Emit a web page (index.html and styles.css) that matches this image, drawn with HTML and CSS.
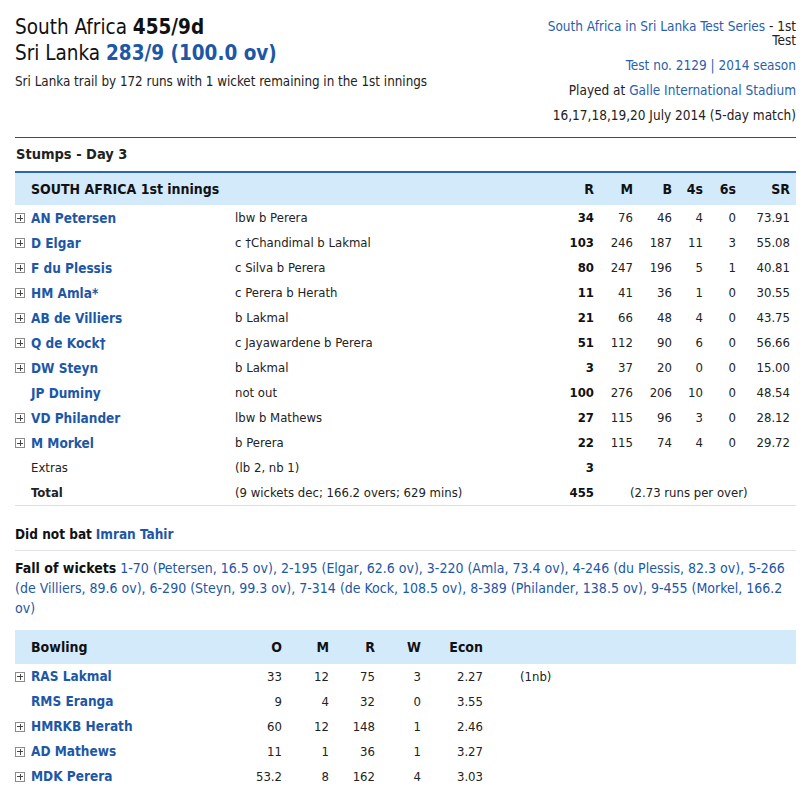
FILE: index.html
```html
<!DOCTYPE html>
<html>
<head>
<meta charset="utf-8">
<link rel="stylesheet" href="styles.css">
</head>
<body>
<div class="page">
  <header class="match-head">
    <div class="scores">
      <div class="team">South Africa <b>455/9d</b></div>
      <div class="team">Sri Lanka <b class="live">283/9 (100.0 ov)</b></div>
      <p class="status">Sri Lanka trail by 172 runs with 1 wicket remaining in the 1st innings</p>
    </div>
    <div class="info">
      <p><a class="lnk">South Africa in Sri Lanka Test Series</a> - 1st Test</p>
      <p class="lnk">Test no. 2129 | 2014 season</p>
      <p>Played at <a class="lnk">Galle International Stadium</a></p>
      <p>16,17,18,19,20 July 2014 (5-day match)</p>
    </div>
  </header>

  <h2 class="state">Stumps - Day 3</h2>

  <table class="bat">
    <colgroup>
      <col class="c-name"><col class="c-dis"><col class="c-r"><col class="c-m"><col class="c-b"><col class="c-4"><col class="c-6"><col class="c-sr">
    </colgroup>
    <thead>
      <tr><th class="lead" colspan="2">SOUTH AFRICA 1st innings</th><th>R</th><th>M</th><th>B</th><th>4s</th><th>6s</th><th>SR</th></tr>
    </thead>
    <tbody>
      <tr><td class="player"><span class="plus"></span><a>AN Petersen</a></td><td>lbw b Perera</td><td class="runs">34</td><td>76</td><td>46</td><td>4</td><td>0</td><td>73.91</td></tr>
      <tr><td class="player"><span class="plus"></span><a>D Elgar</a></td><td>c †Chandimal b Lakmal</td><td class="runs">103</td><td>246</td><td>187</td><td>11</td><td>3</td><td>55.08</td></tr>
      <tr><td class="player"><span class="plus"></span><a>F du Plessis</a></td><td>c Silva b Perera</td><td class="runs">80</td><td>247</td><td>196</td><td>5</td><td>1</td><td>40.81</td></tr>
      <tr><td class="player"><span class="plus"></span><a>HM Amla*</a></td><td>c Perera b Herath</td><td class="runs">11</td><td>41</td><td>36</td><td>1</td><td>0</td><td>30.55</td></tr>
      <tr><td class="player"><span class="plus"></span><a>AB de Villiers</a></td><td>b Lakmal</td><td class="runs">21</td><td>66</td><td>48</td><td>4</td><td>0</td><td>43.75</td></tr>
      <tr><td class="player"><span class="plus"></span><a>Q de Kock†</a></td><td>c Jayawardene b Perera</td><td class="runs">51</td><td>112</td><td>90</td><td>6</td><td>0</td><td>56.66</td></tr>
      <tr><td class="player"><span class="plus"></span><a>DW Steyn</a></td><td>b Lakmal</td><td class="runs">3</td><td>37</td><td>20</td><td>0</td><td>0</td><td>15.00</td></tr>
      <tr><td class="player"><a>JP Duminy</a></td><td>not out</td><td class="runs">100</td><td>276</td><td>206</td><td>10</td><td>0</td><td>48.54</td></tr>
      <tr><td class="player"><span class="plus"></span><a>VD Philander</a></td><td>lbw b Mathews</td><td class="runs">27</td><td>115</td><td>96</td><td>3</td><td>0</td><td>28.12</td></tr>
      <tr><td class="player"><span class="plus"></span><a>M Morkel</a></td><td>b Perera</td><td class="runs">22</td><td>115</td><td>74</td><td>4</td><td>0</td><td>29.72</td></tr>
      <tr><td class="player extra">Extras</td><td>(lb 2, nb 1)</td><td class="runs">3</td><td></td><td></td><td></td><td></td><td></td></tr>
      <tr class="total"><td class="player extra"><b>Total</b></td><td>(9 wickets dec; 166.2 overs; 629 mins)</td><td class="runs">455</td><td class="rpo" colspan="5">(2.73 runs per over)</td></tr>
    </tbody>
  </table>

  <div class="dnb"><b>Did not bat</b> <a>Imran Tahir</a></div>

  <div class="fow"><b class="fow-label">Fall of wickets</b> 1-70 (Petersen, 16.5 ov), 2-195 (Elgar, 62.6 ov), 3-220 (Amla, 73.4 ov), 4-246 (du Plessis, 82.3 ov), 5-266 (de Villiers, 89.6 ov), 6-290 (Steyn, 99.3 ov), 7-314 (de Kock, 108.5 ov), 8-389 (Philander, 138.5 ov), 9-455 (Morkel, 166.2 ov)</div>

  <table class="bowl">
    <colgroup>
      <col class="b-name"><col class="b-o"><col class="b-m"><col class="b-r"><col class="b-w"><col class="b-e"><col class="b-x">
    </colgroup>
    <thead>
      <tr><th class="lead">Bowling</th><th>O</th><th>M</th><th>R</th><th>W</th><th>Econ</th><th></th></tr>
    </thead>
    <tbody>
      <tr><td class="player"><span class="plus"></span><a>RAS Lakmal</a></td><td>33</td><td>12</td><td>75</td><td>3</td><td>2.27</td><td class="note">(1nb)</td></tr>
      <tr><td class="player"><a>RMS Eranga</a></td><td>9</td><td>4</td><td>32</td><td>0</td><td>3.55</td><td class="note"></td></tr>
      <tr><td class="player"><span class="plus"></span><a>HMRKB Herath</a></td><td>60</td><td>12</td><td>148</td><td>1</td><td>2.46</td><td class="note"></td></tr>
      <tr><td class="player"><span class="plus"></span><a>AD Mathews</a></td><td>11</td><td>1</td><td>36</td><td>1</td><td>3.27</td><td class="note"></td></tr>
      <tr><td class="player"><span class="plus"></span><a>MDK Perera</a></td><td>53.2</td><td>8</td><td>162</td><td>4</td><td>3.03</td><td class="note"></td></tr>
    </tbody>
  </table>
</div>
</body>
</html>
```

FILE: styles.css
```css
* { box-sizing: border-box; }
html, body { margin: 0; padding: 0; background: #fff; }
body {
  font-family: "DejaVu Sans Condensed", "DejaVu Sans", sans-serif;
  font-stretch: condensed;
  font-size: 13px;
  color: #222;
}
.page { width: 781px; margin-left: 15px; }
p { margin: 0; }
a { color: #1d57a6; text-decoration: none; }
.lnk { color: #2a5fae; }

.match-head {
  height: 138px;
  border-bottom: 1px solid #4a4a4a;
  display: flex;
  justify-content: space-between;
  align-items: flex-start;
}
.scores { padding-top: 14px; }
.team { font-size: 20.5px; line-height: 26px; color: #111; }
.team b { font-weight: bold; color: #111; }
.team b.live { color: #1d57a6; }
.status { margin-top: 8px; font-size: 13.3px; line-height: 16px; color: #222; }

.info { width: 252px; text-align: right; padding-top: 19px; font-size: 13.5px; line-height: 14px; color: #222; }
.info p + p { margin-top: 11px; }

.state { margin: 0; padding: 6px 0 7px 1px; font-size: 14.5px; line-height: 20px; font-weight: bold; color: #222; }

table { border-collapse: collapse; table-layout: fixed; width: 781px; }
td, th { padding: 0 6px 0 0; text-align: right; white-space: nowrap; }
th { font-weight: bold; font-size: 14px; color: #111; background: #d3eafb; }

.bat { border-top: 2px solid #2a67b1; border-bottom: 1px solid #cfe4f6; }
.bat th { height: 33px; }
.bat td { height: 25px; }
.c-name { width: 220px; } .c-dis { width: 320px; } .c-r { width: 45px; } .c-m { width: 39px; }
.c-b { width: 39px; } .c-4 { width: 31px; } .c-6 { width: 33px; } .c-sr { width: 54px; }
.bat td:nth-child(2) { text-align: left; }
th.lead { text-align: left; padding-left: 16px; }

td.player { text-align: left; padding-left: 16px; position: relative; }
td.player a { font-weight: bold; font-size: 13.5px; }
td.player.extra { color: #222; }
.plus {
  position: absolute; left: 0; top: 8px; width: 10px; height: 10px;
  border: 1px solid #8c8c8c; background: #fff;
}
.plus::before, .plus::after { content: ""; position: absolute; background: #444; }
.plus::before { left: 1px; right: 1px; top: 3.5px; height: 1px; }
.plus::after { top: 1px; bottom: 1px; left: 3.5px; width: 1px; }
td.runs { font-weight: bold; color: #111; }
td.rpo { text-align: left; padding-left: 30px; }

.dnb {
  margin-top: 18px; padding-bottom: 6px; border-bottom: 1px solid #e2e2e2;
  font-size: 13.5px; line-height: 20px; color: #111;
}
.dnb a { font-weight: bold; }
.fow { padding-top: 7px; font-size: 14px; line-height: 20px; color: #1d57a6; }
.fow-label { color: #111; }

.bowl { margin-top: 12px; }
.bowl th { height: 34px; }
.bowl td { height: 25px; }
.b-name { width: 225px; } .b-o { width: 48px; } .b-m { width: 47px; } .b-r { width: 46px; }
.b-w { width: 46px; } .b-e { width: 62px; } .b-x { width: 307px; }
.bowl td.note { text-align: left; padding-left: 31px; }
```
